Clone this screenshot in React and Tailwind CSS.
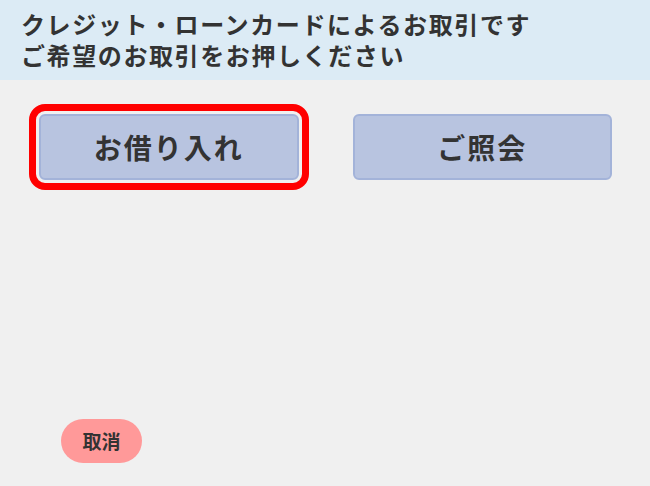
import React from "react";

const jp = { fontFamily: '"Noto Sans CJK JP", "Noto Sans", sans-serif' };

const MenuButton = ({ label, selected = false }) => {
  return (
    <button
      className={`h-[66px] w-full rounded-[6px] border-2 border-[#a3b3d9] bg-[#b8c4e0] text-[28px] font-bold tracking-[2px] text-[#333333] ${
        selected ? "outline-[7px] outline-solid outline-[#ff0000] outline-offset-[3px]" : ""
      }`}
    >
      {label}
    </button>
  );
};

export default function App() {
  return (
    <div className="flex h-screen w-full flex-col bg-[#f0f0f0]" style={jp}>
      {/* Header */}
      <div className="h-[80px] bg-[#dcebf5] px-[21px] pt-[8px] text-[24px] font-bold leading-[31px] tracking-[1.6px] text-[#333333]">
        <p>クレジット・ローンカードによるお取引です</p>
        <p>ご希望のお取引をお押しください</p>
      </div>

      {/* Buttons */}
      <div className="mt-[34px] grid grid-cols-2 gap-[54px] pl-[39px] pr-[38px]">
        <MenuButton label="お借り入れ" selected />
        <MenuButton label="ご照会" />
      </div>

      {/* Cancel */}
      <div className="mt-auto pb-[23px] pl-[61px]">
        <button className="h-[44px] w-[81px] rounded-full bg-[#ff9999] text-[19px] font-bold text-[#333333]">
          取消
        </button>
      </div>
    </div>
  );
}
